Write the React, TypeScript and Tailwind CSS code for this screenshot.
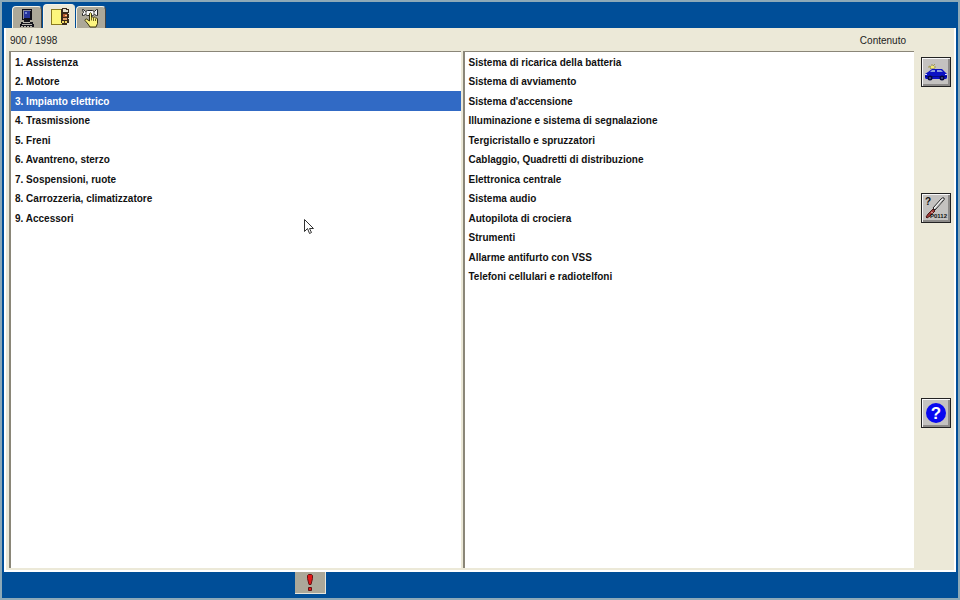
import React, { useState } from 'react';

const chapters = [
  '1. Assistenza',
  '2. Motore',
  '3. Impianto elettrico',
  '4. Trasmissione',
  '5. Freni',
  '6. Avantreno, sterzo',
  '7. Sospensioni, ruote',
  '8. Carrozzeria, climatizzatore',
  '9. Accessori',
];

const sections = [
  'Sistema di ricarica della batteria',
  'Sistema di avviamento',
  "Sistema d'accensione",
  'Illuminazione e sistema di segnalazione',
  'Tergicristallo e spruzzatori',
  'Cablaggio, Quadretti di distribuzione',
  'Elettronica centrale',
  'Sistema audio',
  'Autopilota di crociera',
  'Strumenti',
  'Allarme antifurto con VSS',
  'Telefoni cellulari e radiotelfoni',
];

const ComputerIcon = () => (
  <svg width="16" height="20" viewBox="0 0 16 20" shapeRendering="crispEdges" aria-hidden="true">
    <path d="M3 1h10v11H3z" fill="#101018" />
    <path d="M4 2h8v1H4zM4 3h1v8H4z" fill="#8c8c98" />
    <path d="M5 3h6v7H5z" fill="#26339a" />
    <path d="M6 4h2v2H6z" fill="#7487d6" />
    <path d="M5 12h6v2H5zM2 14h12v2H2zM1 16h14v3H1z" fill="#15151c" />
    <path d="M4 14h7v1H4zM3 16h10v1H3zM2 18h2v1H2zM5 18h2v1H5zM8 18h2v1H8zM11 18h2v1h-2z" fill="#b9b7b0" />
  </svg>
);

const BookIcon = () => (
  <svg width="20" height="20" viewBox="0 0 20 20" shapeRendering="crispEdges" aria-hidden="true">
    <path d="M1 2h12v16H1z" fill="#8a7a20" />
    <path d="M2 3h10v14H2z" fill="#fdf67c" />
    <path d="M12 1h5v1h2v4h-1v1h1v4h-1v1h1v4h-2v2h-5v-2h-1V2h1z" fill="#3a2a1c" />
    <path d="M13 2h3v1h2v2h-5z" fill="#e8e2d0" />
    <path d="M13 7h4v3h-4z" fill="#b55a32" />
    <path d="M15 8h2v1h-2z" fill="#ffd08a" />
    <path d="M13 11h4v2h-4z" fill="#e0a070" />
    <path d="M12 14h5v2h-5z" fill="#f0d860" />
    <path d="M14 14h1v2h-1z" fill="#54371c" />
  </svg>
);

const HandIcon = () => (
  <svg width="20" height="20" viewBox="0 0 20 20" aria-hidden="true">
    <path
      d="M2.500 1.500l2 2 2-1h5l2 1 2-2h1v6h-1l-2-1-2 1h-5l-2-1-2 1h-1v-2l1-1-1-3z"
      fill="#f6f6f6"
      stroke="#222"
    />
    <path d="M5 3v3M13 3v3" stroke="#555" fill="none" />
    <path
      d="M8.500 5.500q1-1.500 2 0v4q1-1 2 0q1-1 2 .5q1.500-.5 2 1v4.500l-1.500 3.500h-6l-2-3-3-3.500q0-1.500 1.500-1.500l3 2z"
      fill="#fdf580"
      stroke="#3b3510"
    />
    <path d="M10.500 9.500v3M12.500 10v3M14.500 11v2" stroke="#6b6120" fill="none" />
  </svg>
);

const CarIcon = () => (
  <svg width="24" height="22" viewBox="0 0 24 22" aria-hidden="true">
    <path d="M8 3v5M5 5l6 3M11 3L6 8M4 6h8" stroke="#a39a50" fill="none" />
    <path d="M7 5h3v2H7z" fill="#f5ec70" />
    <path d="M1 13l3-2 4-3h10l3 3 2 2v4l-1 1H2l-1-1z" fill="#0c12c4" />
    <path d="M8 9h3v2H6zM13 9h4l2 2h-6z" fill="#8c9cdc" />
    <path d="M1 15h22v1H1z" fill="#050a85" />
    <circle cx="6" cy="17" r="2.500" fill="#07083c" />
    <circle cx="18" cy="17" r="2.500" fill="#07083c" />
    <path d="M5 17h2M17 17h2" stroke="#6774c4" />
    <path d="M1 13.500h2M21 13.500h2" stroke="#d6dcff" />
  </svg>
);

const ProbeIcon = () => (
  <svg width="28" height="26" viewBox="0 0 28 26" aria-hidden="true">
    <text x="3" y="10" fontSize="10" className="font-bold" fill="#111">?</text>
    <path d="M4 22l2-3 5-5 2 2-5 5-3 2z" fill="#a03a38" stroke="#4a1818" />
    <path d="M11 13l8-9q2-2 3-1t-1 3l-8 9z" fill="#f4f4f4" stroke="#222" />
    <path d="M13 14l8-9" stroke="#999" />
    <path d="M9 17l2 1" stroke="#e4b2aa" />
    <text x="8" y="23" fontSize="6" className="font-bold" fill="#111">P0112</text>
  </svg>
);

const HelpIcon = () => (
  <svg width="22" height="22" viewBox="0 0 22 22" aria-hidden="true">
    <circle cx="11" cy="11" r="10" fill="#0808f0" />
    <text x="11" y="17" fontSize="17" textAnchor="middle" className="font-bold" fill="#fff">?</text>
  </svg>
);

const AlertIcon = () => (
  <svg width="10" height="18" viewBox="0 0 10 18" aria-hidden="true">
    <path d="M2.500 1.500l1-1h3l1 1v3l-1.500 6h-2l-1.500-6z" fill="#e01818" stroke="#651414" />
    <path d="M3.500 13.500h3v3h-3z" fill="#e01818" stroke="#651414" />
  </svg>
);

interface ListPaneProps {
  items: string[];
  label: string;
  selected: number;
  onSelect: (index: number) => void;
}

const ListPane: React.FC<ListPaneProps> = ({ items, label, selected, onSelect }) => (
  <ul aria-label={label} className="min-w-0 flex-1 border-l-2 border-t border-[#8a8678] bg-white">
    {items.map((item, i) => (
      <li key={item} className="flex odd:h-5 even:h-[19px]">
        <button
          type="button"
          onClick={() => onSelect(i)}
          className={`w-full truncate px-1 text-left text-[10px] font-bold ${
            i === selected ? 'bg-[#316ac5] text-white' : 'text-[#111111]'
          }`}
        >
          {item}
        </button>
      </li>
    ))}
  </ul>
);

const toolClass =
  'flex size-[30px] items-center justify-center border border-[#222222] bg-[#c4c2c0] shadow-[inset_1px_1px_0_#f8f8f8,inset_-2px_-2px_0_#8c8a88]';

export default function App() {
  const [chapter, setChapter] = useState(2);
  const [section, setSection] = useState(-1);
  const [tab, setTab] = useState(1);

  const tabs = [
    { label: 'Computer', icon: <ComputerIcon /> },
    { label: 'Manuale', icon: <BookIcon /> },
    { label: 'Selezione', icon: <HandIcon /> },
  ];

  return (
    <div className="relative flex min-h-screen flex-col border-2 border-[#8da9b8] bg-[#004e98] px-[2px] font-['Liberation_Sans',Arial,sans-serif] text-[#222222]">
      <nav className="flex h-[26px] items-end gap-px pl-2">
        {tabs.map((t, i) => (
          <button
            key={t.label}
            type="button"
            aria-label={t.label}
            onClick={() => setTab(i)}
            className={`flex items-center justify-center rounded-t-sm border-l border-t border-[#f4f2e8] ${
              i === tab ? 'h-6 w-8 bg-[#ece9d8]' : 'h-[22px] w-[30px] border-r border-r-[#444444] bg-[#aca899]'
            }`}
          >
            {t.icon}
          </button>
        ))}
      </nav>

      <main className="flex flex-1 border-2 border-t-0 border-white bg-[#ece9d8] pb-[2px] pl-[3px]">
        <div className="flex min-w-0 flex-1 flex-col">
          <header className="flex h-[23px] items-center justify-between pl-px pr-2 pt-[2px] text-[10px]">
            <span>900 / 1998</span>
            <span>Contenuto</span>
          </header>
          <div className="flex flex-1 gap-[2px]">
            <ListPane items={chapters} label="Capitoli" selected={chapter} onSelect={setChapter} />
            <ListPane items={sections} label="Contenuto" selected={section} onSelect={setSection} />
          </div>
        </div>

        <aside className="flex w-10 flex-col items-end pr-[3px] pt-[29px]">
          <button type="button" aria-label="Vettura" className={toolClass}>
            <CarIcon />
          </button>
          <button type="button" aria-label="Codici guasto" className={`mt-[106px] ${toolClass}`}>
            <ProbeIcon />
          </button>
          <button type="button" aria-label="Aiuto" className={`mt-[175px] ${toolClass}`}>
            <HelpIcon />
          </button>
        </aside>
      </main>

      <footer className="flex h-[26px] items-start pl-[291px]">
        <button
          type="button"
          aria-label="Avvisi"
          className="flex h-[22px] w-[31px] items-center justify-center border-b border-r border-[#e8e6dc] bg-[#aca899]"
        >
          <AlertIcon />
        </button>
      </footer>

      {/* mouse pointer */}
      <svg
        className="pointer-events-none absolute left-[301px] top-[216px]"
        width="12"
        height="19"
        viewBox="0 0 12 19"
        aria-hidden="true"
      >
        <path d="M1.500 1.500v12l3-3 2 5 2-1-2-4h4z" fill="#fff" stroke="#333" />
      </svg>
    </div>
  );
}
